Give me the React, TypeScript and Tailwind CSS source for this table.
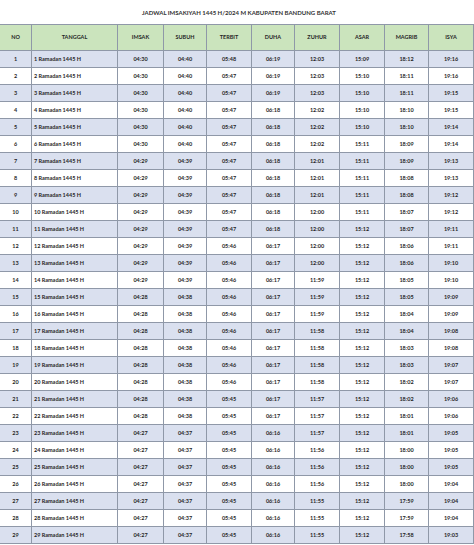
const COLS = "grid-cols-[32px_86px_46px_43px_45px_43px_45px_45px_44px_45px]";

const headers = ["NO", "TANGGAL", "IMSAK", "SUBUH", "TERBIT", "DUHA", "ZUHUR", "ASAR", "MAGRIB", "ISYA"];

// imsak, subuh, terbit, duha, zuhur, asar, magrib, isya
const rows: string[][] = [
  ["04:30", "04:40", "05:48", "06:19", "12:03", "15:09", "18:12", "19:16"],
  ["04:30", "04:40", "05:47", "06:19", "12:03", "15:10", "18:11", "19:16"],
  ["04:30", "04:40", "05:47", "06:19", "12:03", "15:10", "18:11", "19:15"],
  ["04:30", "04:40", "05:47", "06:18", "12:02", "15:10", "18:10", "19:15"],
  ["04:30", "04:40", "05:47", "06:18", "12:02", "15:10", "18:10", "19:14"],
  ["04:30", "04:40", "05:47", "06:18", "12:02", "15:11", "18:09", "19:14"],
  ["04:29", "04:39", "05:47", "06:18", "12:01", "15:11", "18:09", "19:13"],
  ["04:29", "04:39", "05:47", "06:18", "12:01", "15:11", "18:08", "19:13"],
  ["04:29", "04:39", "05:47", "06:18", "12:01", "15:11", "18:08", "19:12"],
  ["04:29", "04:39", "05:47", "06:18", "12:00", "15:11", "18:07", "19:12"],
  ["04:29", "04:39", "05:47", "06:18", "12:00", "15:12", "18:07", "19:11"],
  ["04:29", "04:39", "05:46", "06:17", "12:00", "15:12", "18:06", "19:11"],
  ["04:29", "04:39", "05:46", "06:17", "12:00", "15:12", "18:06", "19:10"],
  ["04:29", "04:39", "05:46", "06:17", "11:59", "15:12", "18:05", "19:10"],
  ["04:28", "04:38", "05:46", "06:17", "11:59", "15:12", "18:05", "19:09"],
  ["04:28", "04:38", "05:46", "06:17", "11:59", "15:12", "18:04", "19:09"],
  ["04:28", "04:38", "05:46", "06:17", "11:58", "15:12", "18:04", "19:08"],
  ["04:28", "04:38", "05:46", "06:17", "11:58", "15:12", "18:03", "19:08"],
  ["04:28", "04:38", "05:46", "06:17", "11:58", "15:12", "18:03", "19:07"],
  ["04:28", "04:38", "05:46", "06:17", "11:58", "15:12", "18:02", "19:07"],
  ["04:28", "04:38", "05:45", "06:17", "11:57", "15:12", "18:02", "19:06"],
  ["04:28", "04:38", "05:45", "06:17", "11:57", "15:12", "18:01", "19:06"],
  ["04:27", "04:37", "05:45", "06:16", "11:57", "15:12", "18:01", "19:05"],
  ["04:27", "04:37", "05:45", "06:16", "11:56", "15:12", "18:00", "19:05"],
  ["04:27", "04:37", "05:45", "06:16", "11:56", "15:12", "18:00", "19:05"],
  ["04:27", "04:37", "05:45", "06:16", "11:56", "15:12", "18:00", "19:04"],
  ["04:27", "04:37", "05:45", "06:16", "11:55", "15:12", "17:59", "19:04"],
  ["04:27", "04:37", "05:45", "06:16", "11:55", "15:12", "17:59", "19:04"],
  ["04:27", "04:37", "05:45", "06:16", "11:55", "15:12", "17:58", "19:03"],
];

export default function App() {
  return (
    <div className="h-[545px] w-[474px] overflow-hidden bg-white font-['Lato','Liberation_Sans',sans-serif] font-bold text-[#262626]">
      {/* Title */}
      <div className="flex h-[24px] items-center justify-center pl-[4px] text-[6px] text-[#333333]">
        JADWAL IMSAKIYAH 1445 H/2024 M KABUPATEN BANDUNG BARAT
      </div>

      <div className="border-t border-[#8f98a8]">
        {/* Header */}
        <div className={`grid ${COLS} h-[26px] bg-[#cbe4bd] text-[5.5px]`}>
          {headers.map((h) => (
            <div
              key={h}
              className="flex items-center justify-center border-r border-b border-[#8f98a8]"
            >
              {h}
            </div>
          ))}
        </div>

        {/* Body */}
        {rows.map((r, i) => (
          <div
            key={i}
            className={`grid ${COLS} h-[17px] text-[5.5px] ${i % 2 === 0 ? "bg-[#dae0ef]" : "bg-white"}`}
          >
            <div className="flex items-center justify-center border-r border-b border-[#8f98a8]">
              {i + 1}
            </div>
            <div className="flex items-center border-r border-b border-[#8f98a8] pl-[2px]">
              {i + 1} Ramadan 1445 H
            </div>
            {r.map((t, j) => (
              <div
                key={j}
                className="flex items-center justify-center border-r border-b border-[#8f98a8]"
              >
                {t}
              </div>
            ))}
          </div>
        ))}
      </div>
    </div>
  );
}
